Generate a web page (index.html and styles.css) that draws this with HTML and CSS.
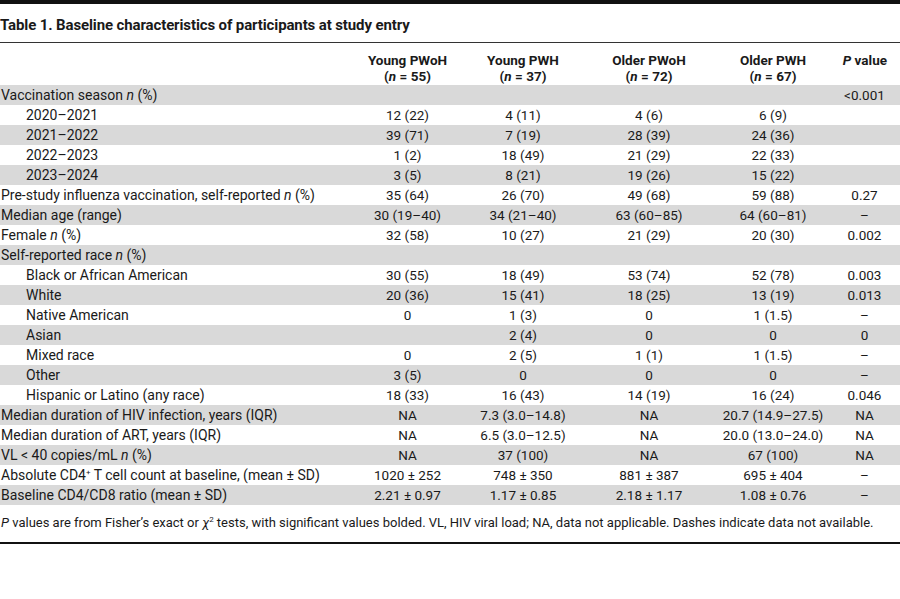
FILE: index.html
```html
<!DOCTYPE html>
<html lang="en">
<head>
    <meta charset="UTF-8">
    <title>Table 1</title>
    <link rel="stylesheet" href="styles.css">
</head>
<body>
    <div class="table-wrap">
        <h1 class="caption">Table 1. Baseline characteristics of participants at study entry</h1>
        <table class="data">
            <colgroup>
                <col class="c-label">
                <col class="c1">
                <col class="c2">
                <col class="c3">
                <col class="c4">
                <col class="c5">
            </colgroup>
            <thead>
                <tr>
                    <th></th>
                    <th>Young PWoH<br>(<i>n</i> = 55)</th>
                    <th>Young PWH<br>(<i>n</i> = 37)</th>
                    <th>Older PWoH<br>(<i>n</i> = 72)</th>
                    <th>Older PWH<br>(<i>n</i> = 67)</th>
                    <th class="pv"><i>P</i> value</th>
                </tr>
            </thead>
            <tbody>
                <tr><td>Vaccination season <i>n</i> (%)</td><td></td><td></td><td></td><td></td><td>&lt;0.001</td></tr>
                <tr><td class="sub">2020–2021</td><td>12 (22)</td><td>4 (11)</td><td>4 (6)</td><td>6 (9)</td><td></td></tr>
                <tr><td class="sub">2021–2022</td><td>39 (71)</td><td>7 (19)</td><td>28 (39)</td><td>24 (36)</td><td></td></tr>
                <tr><td class="sub">2022–2023</td><td>1 (2)</td><td>18 (49)</td><td>21 (29)</td><td>22 (33)</td><td></td></tr>
                <tr><td class="sub">2023–2024</td><td>3 (5)</td><td>8 (21)</td><td>19 (26)</td><td>15 (22)</td><td></td></tr>
                <tr><td>Pre-study influenza vaccination, self-reported <i>n</i> (%)</td><td>35 (64)</td><td>26 (70)</td><td>49 (68)</td><td>59 (88)</td><td>0.27</td></tr>
                <tr><td>Median age (range)</td><td>30 (19–40)</td><td>34 (21–40)</td><td>63 (60–85)</td><td>64 (60–81)</td><td>–</td></tr>
                <tr><td>Female <i>n</i> (%)</td><td>32 (58)</td><td>10 (27)</td><td>21 (29)</td><td>20 (30)</td><td>0.002</td></tr>
                <tr><td>Self-reported race <i>n</i> (%)</td><td></td><td></td><td></td><td></td><td></td></tr>
                <tr><td class="sub">Black or African American</td><td>30 (55)</td><td>18 (49)</td><td>53 (74)</td><td>52 (78)</td><td>0.003</td></tr>
                <tr><td class="sub">White</td><td>20 (36)</td><td>15 (41)</td><td>18 (25)</td><td>13 (19)</td><td>0.013</td></tr>
                <tr><td class="sub">Native American</td><td>0</td><td>1 (3)</td><td>0</td><td>1 (1.5)</td><td>–</td></tr>
                <tr><td class="sub">Asian</td><td></td><td>2 (4)</td><td>0</td><td>0</td><td>0</td></tr>
                <tr><td class="sub">Mixed race</td><td>0</td><td>2 (5)</td><td>1 (1)</td><td>1 (1.5)</td><td>–</td></tr>
                <tr><td class="sub">Other</td><td>3 (5)</td><td>0</td><td>0</td><td>0</td><td>–</td></tr>
                <tr><td class="sub">Hispanic or Latino (any race)</td><td>18 (33)</td><td>16 (43)</td><td>14 (19)</td><td>16 (24)</td><td>0.046</td></tr>
                <tr><td>Median duration of HIV infection, years (IQR)</td><td>NA</td><td>7.3 (3.0–14.8)</td><td>NA</td><td>20.7 (14.9–27.5)</td><td>NA</td></tr>
                <tr><td>Median duration of ART, years (IQR)</td><td>NA</td><td>6.5 (3.0–12.5)</td><td>NA</td><td>20.0 (13.0–24.0)</td><td>NA</td></tr>
                <tr><td>VL &lt; 40 copies/mL <i>n</i> (%)</td><td>NA</td><td>37 (100)</td><td>NA</td><td>67 (100)</td><td>NA</td></tr>
                <tr><td>Absolute CD4<sup>+</sup> T cell count at baseline, (mean ± SD)</td><td>1020 ± 252</td><td>748 ± 350</td><td>881 ± 387</td><td>695 ± 404</td><td>–</td></tr>
                <tr><td>Baseline CD4/CD8 ratio (mean ± SD)</td><td>2.21 ± 0.97</td><td>1.17 ± 0.85</td><td>2.18 ± 1.17</td><td>1.08 ± 0.76</td><td>–</td></tr>
            </tbody>
        </table>
        <p class="note"><i>P</i> values are from Fisher’s exact or <i>χ</i><sup>2</sup> tests, with significant values bolded. VL, HIV viral load; NA, data not applicable. Dashes indicate data not available.</p>
    </div>
</body>
</html>
```

FILE: styles.css
```css
body {
    margin: 0;
    font-family: Roboto, "Liberation Sans", sans-serif;
    color: #1a1a1a;
    background: #fff;
}

.table-wrap {
    border-top: 4px solid #111;
}

.caption {
    margin: 0;
    padding: 13px 0 9px 0;
    font-size: 15px;
    line-height: 16px;
    font-weight: bold;
    letter-spacing: -0.12px;
    border-bottom: 1px solid #333;
}

.data {
    width: 100%;
    border-collapse: collapse;
    table-layout: fixed;
    font-size: 13.5px;
}

.c-label { width: 350px; }
.c1 { width: 115px; }
.c2 { width: 116px; }
.c3 { width: 136px; }
.c4 { width: 112px; }
.c5 { width: 71px; }

.data th {
    font-weight: bold;
    text-align: center;
    line-height: 16px;
    padding: 9px 0 1px 0;
    vertical-align: top;
}

.data th.pv {
    text-align: right;
    padding-right: 13px;
}

.data td {
    height: 20px;
    padding: 0;
    line-height: 20px;
    text-align: center;
    white-space: nowrap;
}

.data td:first-child {
    text-align: left;
    padding-left: 1px;
    font-size: 14px;
}

.data td.sub {
    padding-left: 26px;
}

.data tbody tr:nth-child(odd) {
    background: #d9d9d9;
}

sup {
    font-size: 8px;
    line-height: 0;
    vertical-align: 5px;
}

.note {
    margin: 0;
    padding: 9px 0 10px 1px;
    font-size: 13px;
    line-height: 18px;
    border-bottom: 2px solid #111;
}
```
